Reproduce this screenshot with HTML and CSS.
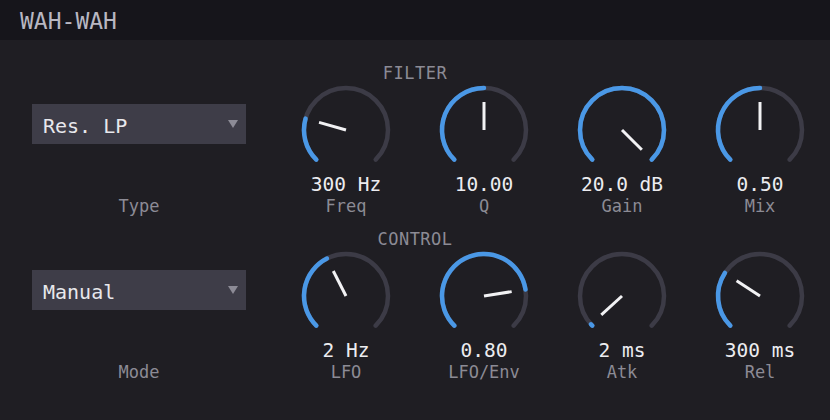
FILE: index.html
```html
<!DOCTYPE html>
<html lang="en">
  <head>
    <meta charset="UTF-8" />
    <meta name="viewport" content="width=device-width, initial-scale=1.0" />
    <title>Wah-Wah</title>
    <link rel="stylesheet" href="styles.css">
  </head>
  <body>
    <header class="titlebar">WAH-WAH</header>

    <main class="panel">
      <!-- Filter section -->
      <section class="section">
        <div class="section-title">FILTER</div>
        <div class="row">
          <div class="select-col">
            <div class="select">
              <span class="select-text">Res. LP</span>
              <svg class="caret" width="10" height="8" viewBox="0 0 10 8"><polygon points="0,0 10,0 5,8" /></svg>
            </div>
            <div class="label">Type</div>
          </div>

          <div class="knob">
            <svg width="96" height="88" viewBox="0 0 96 88">
              <path class="track" d="M18.3 77.7 A42 42 0 1 1 77.7 77.7" />
              <path class="fill" d="M18.3 77.7 A42 42 0 0 1 7.57 36.6" />
              <line class="needle" x1="48" y1="48" x2="21.05" y2="40.4" />
            </svg>
            <div class="value">300 Hz</div>
            <div class="label">Freq</div>
          </div>

          <div class="knob">
            <svg width="96" height="88" viewBox="0 0 96 88">
              <path class="track" d="M18.3 77.7 A42 42 0 1 1 77.7 77.7" />
              <path class="fill" d="M18.3 77.7 A42 42 0 0 1 48 6" />
              <line class="needle" x1="48" y1="48" x2="48" y2="20" />
            </svg>
            <div class="value">10.00</div>
            <div class="label">Q</div>
          </div>

          <div class="knob">
            <svg width="96" height="88" viewBox="0 0 96 88">
              <path class="track" d="M18.3 77.7 A42 42 0 1 1 77.7 77.7" />
              <path class="fill" d="M18.3 77.7 A42 42 0 1 1 77.7 77.7" />
              <line class="needle" x1="48" y1="48" x2="67.8" y2="67.8" />
            </svg>
            <div class="value">20.0 dB</div>
            <div class="label">Gain</div>
          </div>

          <div class="knob">
            <svg width="96" height="88" viewBox="0 0 96 88">
              <path class="track" d="M18.3 77.7 A42 42 0 1 1 77.7 77.7" />
              <path class="fill" d="M18.3 77.7 A42 42 0 0 1 48 6" />
              <line class="needle" x1="48" y1="48" x2="48" y2="20" />
            </svg>
            <div class="value">0.50</div>
            <div class="label">Mix</div>
          </div>
        </div>
      </section>

      <!-- Control section -->
      <section class="section">
        <div class="section-title">CONTROL</div>
        <div class="row">
          <div class="select-col">
            <div class="select">
              <span class="select-text">Manual</span>
              <svg class="caret" width="10" height="8" viewBox="0 0 10 8"><polygon points="0,0 10,0 5,8" /></svg>
            </div>
            <div class="label">Mode</div>
          </div>

          <div class="knob">
            <svg width="96" height="88" viewBox="0 0 96 88">
              <path class="track" d="M18.3 77.7 A42 42 0 1 1 77.7 77.7" />
              <path class="fill" d="M18.3 77.7 A42 42 0 0 1 28.93 10.58" />
              <line class="needle" x1="48" y1="48" x2="35.29" y2="23.05" />
            </svg>
            <div class="value">2 Hz</div>
            <div class="label">LFO</div>
          </div>

          <div class="knob">
            <svg width="96" height="88" viewBox="0 0 96 88">
              <path class="track" d="M18.3 77.7 A42 42 0 1 1 77.7 77.7" />
              <path class="fill" d="M18.3 77.7 A42 42 0 1 1 89.48 41.43" />
              <line class="needle" x1="48" y1="48" x2="75.66" y2="43.62" />
            </svg>
            <div class="value">0.80</div>
            <div class="label">LFO/Env</div>
          </div>

          <div class="knob">
            <svg width="96" height="88" viewBox="0 0 96 88">
              <path class="track" d="M18.3 77.7 A42 42 0 1 1 77.7 77.7" />
              <path class="fill" d="M18.3 77.7 A42 42 0 0 1 16.94 76.27" />
              <line class="needle" x1="48" y1="48" x2="27.29" y2="66.84" />
            </svg>
            <div class="value">2 ms</div>
            <div class="label">Atk</div>
          </div>

          <div class="knob">
            <svg width="96" height="88" viewBox="0 0 96 88">
              <path class="track" d="M18.3 77.7 A42 42 0 1 1 77.7 77.7" />
              <path class="fill" d="M18.3 77.7 A42 42 0 0 1 12.9 24.94" />
              <line class="needle" x1="48" y1="48" x2="24.6" y2="32.63" />
            </svg>
            <div class="value">300 ms</div>
            <div class="label">Rel</div>
          </div>
        </div>
      </section>
    </main>
  </body>
</html>
```

FILE: styles.css
```css
* {
  margin: 0;
  padding: 0;
  box-sizing: border-box;
}

body {
  background: #1f1e23;
  color: #e8e8ec;
  font-family: "DejaVu Sans Mono", "Liberation Mono", monospace;
  width: 830px;
  height: 420px;
  overflow: hidden;
}

.titlebar {
  height: 40px;
  background: #16151b;
  color: #b8b7c2;
  font-size: 23px;
  line-height: 42px;
  padding-left: 20px;
}

.panel {
  padding: 24px 0 0 32px;
  display: flex;
  flex-direction: column;
  gap: 14px;
}

.section-title {
  width: 766px;
  text-align: center;
  color: #8c8b95;
  font-size: 17px;
  line-height: 18px;
  letter-spacing: 0.5px;
}

.row {
  display: flex;
  align-items: stretch;
}

.select-col {
  width: 214px;
  margin-right: 31px;
  display: flex;
  flex-direction: column;
  align-items: center;
}

.select {
  width: 100%;
  height: 40px;
  margin-top: 22px;
  background: #3e3d48;
  display: flex;
  align-items: center;
  justify-content: space-between;
  padding: 0 8px 0 11px;
  font-size: 20px;
  color: #e8e8ec;
}

.select-text {
  padding-top: 4px;
}

.caret {
  fill: #8c8b96;
}

.select-col .label {
  margin-top: auto;
}

.knob {
  width: 138px;
  display: flex;
  flex-direction: column;
  align-items: center;
}

.knob svg {
  display: block;
}

.track,
.fill {
  fill: none;
  stroke-width: 4.5;
  stroke-linecap: round;
}

.track {
  stroke: #3c3b46;
}

.fill {
  stroke: #4a98e6;
}

.needle {
  stroke: #f2f2f4;
  stroke-width: 3;
}

.value {
  margin-top: 4px;
  font-size: 19.5px;
  line-height: 22px;
  color: #ececf0;
}

.label {
  font-size: 17px;
  line-height: 20px;
  color: #8c8b95;
}
```
